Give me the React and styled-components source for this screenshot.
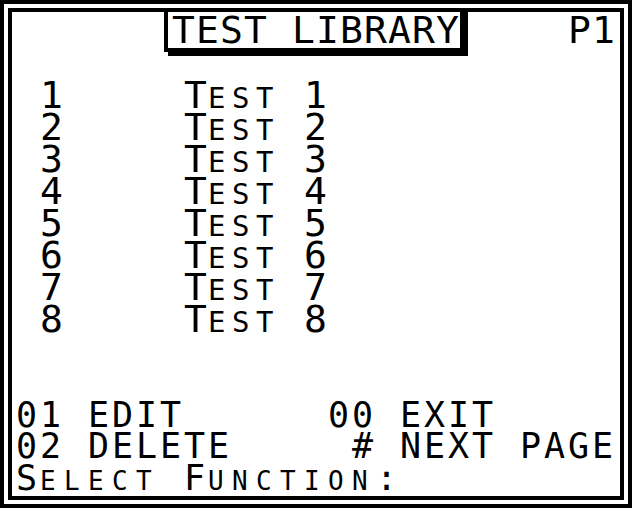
import React from 'react'
import styled, { createGlobalStyle } from 'styled-components'

const GlobalStyle = createGlobalStyle`
  html, body {
    margin: 0;
    padding: 0;
    background: #fff;
  }
  body {
    width: 640px;
    height: 512px;
    overflow: hidden;
  }
`

// one character cell of the LCD is 24px wide
const cell = 'letter-spacing: calc(24px - 1ch);'

const Frame = styled.div`
  box-sizing: border-box;
  width: 632px;
  height: 508px;
  border: 4px solid #000;
  padding: 4px;
  background: #fff;
`

const Screen = styled.div`
  box-sizing: border-box;
  height: 100%;
  border: 4px solid #000;
  padding: 0 4px;
  display: flex;
  flex-direction: column;
  font-family: 'DejaVu Sans Mono', 'Liberation Mono', monospace;
  color: #000;
  white-space: pre;
`

const TitleRow = styled.div`
  display: flex;
  align-items: flex-start;
  height: 40px;
  font-size: 38px;
  line-height: 36px;
  ${cell}
`

const TitleBox = styled.div`
  margin: -4px 0 0 148px;
  border: 4px solid #000;
  padding-left: 4px;
  background: #fff;
  box-shadow: 4px 4px 0 #000;
`

const PageNo = styled.div`
  margin-left: auto;
`

const List = styled.div`
  margin-top: 27px;
  display: flex;
  flex-direction: column;
  font-size: 38px;
  line-height: 32px;
  ${cell}
`

const ListRow = styled.div`
  display: grid;
  grid-template-columns: 144px 1fr;
  height: 32px;
  padding-left: 24px;
`

const Small = styled.span`
  font-size: ${p => p.$size}px;
  line-height: 0;
  text-transform: uppercase;
  ${cell}
`

const Menu = styled.div`
  margin-top: auto;
  padding-bottom: 2px;
  display: grid;
  grid-template-columns: 312px 1fr;
  grid-auto-rows: 31.5px;
  font-size: 35px;
  line-height: 31.5px;
  ${cell}
`

const MenuItem = styled.div`
  display: flex;
`

const Key = styled.span`
  display: inline-block;
  width: 48px;
  text-align: right;
`

const Label = styled.span`
  margin-left: 24px;
`

const Prompt = styled.div`
  grid-column: 1 / -1;
`

const tests = [1, 2, 3, 4, 5, 6, 7, 8]

const menu = [
  { key: '01', label: 'EDIT' },
  { key: '00', label: 'EXIT' },
  { key: '02', label: 'DELETE' },
  { key: '#', label: 'NEXT PAGE' },
]

export default function App () {
  return (
    <>
      <GlobalStyle />
      <Frame>
        <Screen>
          <TitleRow>
            <TitleBox>TEST LIBRARY</TitleBox>
            <PageNo>P1</PageNo>
          </TitleRow>
          <List>
            {tests.map(n => (
              <ListRow key={n}>
                <span>{n}</span>
                <span>T<Small $size={29}>est</Small> {n}</span>
              </ListRow>
            ))}
          </List>
          <Menu>
            {menu.map(item => (
              <MenuItem key={item.key}>
                <Key>{item.key}</Key>
                <Label>{item.label}</Label>
              </MenuItem>
            ))}
            <Prompt>
              S<Small $size={26}>elect</Small> F<Small $size={26}>unction</Small>:
            </Prompt>
          </Menu>
        </Screen>
      </Frame>
    </>
  )
}
